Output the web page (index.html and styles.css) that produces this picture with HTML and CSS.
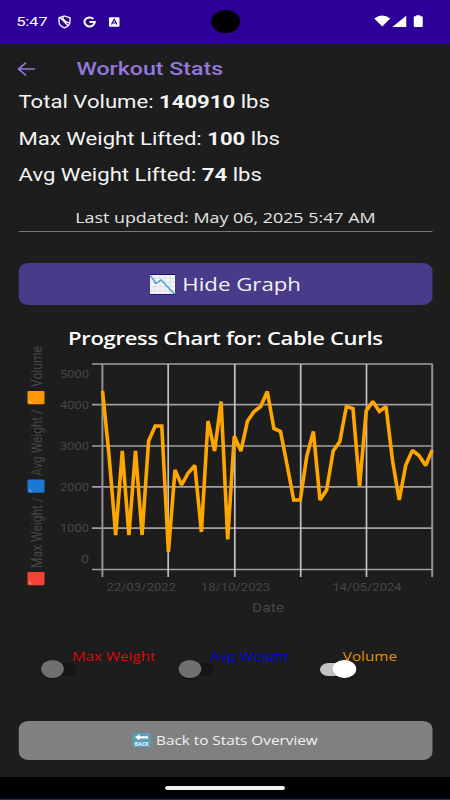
FILE: index.html
```html
<!DOCTYPE html>
<html lang="en">
<head>
<meta charset="utf-8">
<title>Workout Stats</title>
<link rel="stylesheet" href="styles.css">
</head>
<body>
<div class="phone">
  <header class="status">
    <span class="clock">5:47</span>
    <svg class="status-left" viewBox="0 0 64 14" preserveAspectRatio="none">
      <path d="M7 1 L12.500 2.800 V6.500 C12.500 9.700 10 11.900 7 12.800 C4 11.900 1.500 9.700 1.500 6.500 V2.800 Z M3 3 L11 11 M5.500 2 C5 6 8 6 11.500 8" fill="none" stroke="#fff" stroke-width="1.300"/>
      <path d="M36 3.900 A5.200 4.500 0 1 0 37.300 7 H32" fill="none" stroke="#fff" stroke-width="2"/>
      <rect x="51.500" y="2.300" width="10.500" height="9.400" rx="1" fill="#fff"/>
      <path d="M54 9.500 L56.700 4.300 L59.500 9.500 M55.200 8 H58.300" fill="none" stroke="#2d0097" stroke-width="1.200"/>
    </svg>
    <span class="camera"></span>
    <svg class="status-right" viewBox="0 0 52 14" preserveAspectRatio="none">
      <path d="M0.500 4.500 Q8.500 -1.500 16.500 4.500 L8.500 12.500 Z" fill="#fff"/>
      <path d="M18.500 13 L32.500 1.800 V13 Z" fill="#fff"/>
      <path d="M40 3 Q40 2.300 41 2.300 H42.500 V1.300 H46.500 V2.300 H48 Q49 2.300 49 3 V12 Q49 13 48 13 H41 Q40 13 40 12 Z" fill="#fff"/>
    </svg>
  </header>

  <nav class="toolbar">
    <svg class="back" viewBox="0 0 18 14" preserveAspectRatio="none">
      <path d="M17.500 7 H1 M8.500 0.700 L1 7 L8.500 13.300" fill="none" stroke="#9478dc" stroke-width="1.600"/>
    </svg>
    <h1 class="title">Workout Stats</h1>
  </nav>

  <main class="content">
    <p class="stat">Total Volume: <b>140910</b> lbs</p>
    <p class="stat">Max Weight Lifted: <b>100</b> lbs</p>
    <p class="stat">Avg Weight Lifted: <b>74</b> lbs</p>
    <p class="updated">Last updated: May 06, 2025 5:47 AM</p>
    <button class="btn graph-btn">
      <svg class="graph-icon" viewBox="0 0 25 20" preserveAspectRatio="none">
        <rect width="25" height="20" fill="#f4f5f7"/>
        <path d="M5 0V20M10 0V20M15 0V20M20 0V20M0 4H25M0 8H25M0 12H25M0 16H25" stroke="#d5dbe0" stroke-width=".8"/>
        <path d="M0 .5H25M0 19.500H25" stroke="#20107c"/>
        <path d="M0.500 1.500 L6 9 L11 5.500 L24.500 19" fill="none" stroke="#2f9ad6" stroke-width="1.300"/>
      </svg>
      <span>Hide Graph</span>
    </button>
    <h2 class="chart-title">Progress Chart for: Cable Curls</h2>
  </main>

  <svg class="chart" viewBox="0 345 450 275" preserveAspectRatio="none">
    <path class="grid-h" d="M92 364H432.500M92 404.700H432M92 446H432M92 486.800H432M92 528.200H432M92 569.500H432"/>
    <path class="grid-v" d="M168.200 364V577M234.800 364V577M300.700 364V577M366.500 364V577"/>
    <path class="grid-edge" d="M102.400 364V577M432.200 364V577"/>
    <polyline class="volume" points="102.500,391 109.100,456 115.700,535 122.300,451 128.900,535 135.500,451 142.100,535 148.600,441 155.200,426 161.800,426 168.400,552 175,470 181.600,485 188.200,473 194.800,465.500 201.400,532 208,421 214.600,451 221.100,401.500 227.700,539.500 234.300,436 240.900,451 247.500,421 254.100,411.500 260.700,406.500 267.300,391.500 273.900,428.500 280.500,431.500 287.100,465 293.700,500 300.300,500 306.800,456 313.400,431.500 320,500 326.600,490 333.200,451 339.800,441.500 346.400,406.500 353,408.500 359.600,486 366.200,411 372.800,401.500 379.400,411.500 386,406.500 392.600,461 399.200,500 405.800,465 412.400,450.500 419,455.500 425.600,465.500 432.200,450"/>
    <g class="axis-label">
      <text x="60" y="378" textLength="29" lengthAdjust="spacingAndGlyphs">5000</text>
      <text x="60" y="409" textLength="29" lengthAdjust="spacingAndGlyphs">4000</text>
      <text x="60" y="450" textLength="29" lengthAdjust="spacingAndGlyphs">3000</text>
      <text x="60" y="491" textLength="29" lengthAdjust="spacingAndGlyphs">2000</text>
      <text x="60" y="532" textLength="29" lengthAdjust="spacingAndGlyphs">1000</text>
      <text x="81" y="562.500" textLength="8" lengthAdjust="spacingAndGlyphs">0</text>
      <text x="106.500" y="591" textLength="69.500" lengthAdjust="spacingAndGlyphs">22/03/2022</text>
      <text x="201" y="591" textLength="69" lengthAdjust="spacingAndGlyphs">18/10/2023</text>
      <text x="332.500" y="591" textLength="69" lengthAdjust="spacingAndGlyphs">14/05/2024</text>
      <text class="axis-name" x="252" y="612" textLength="32" lengthAdjust="spacingAndGlyphs">Date</text>
    </g>
    <g class="legend" transform="translate(41.500 0)">
      <text transform="translate(0 568) rotate(-90)" textLength="71" lengthAdjust="spacingAndGlyphs">Max Weight /</text>
      <text transform="translate(0 476) rotate(-90)" textLength="67" lengthAdjust="spacingAndGlyphs">Avg Weight /</text>
      <text transform="translate(0 387) rotate(-90)" textLength="41" lengthAdjust="spacingAndGlyphs">Volume</text>
    </g>
    <rect x="27.500" y="391" width="17" height="13.300" rx="1" fill="#ff9800"/>
    <rect x="27.500" y="479.500" width="17" height="13.300" rx="1" fill="#1d77d5"/>
    <rect x="27.500" y="572" width="17" height="13.300" rx="1" fill="#f44336"/>
    <path d="M29 401L31.500 403.200M29 489.500L31.500 491.700M29 582L31.500 584.200" stroke="#fff" stroke-opacity=".6"/>
  </svg>

  <section class="toggles">
    <div class="toggle max"><span class="switch"></span><span class="label">Max Weight</span></div>
    <div class="toggle avg"><span class="switch"></span><span class="label">Avg Weight</span></div>
    <div class="toggle vol"><span class="switch on"></span><span class="label">Volume</span></div>
  </section>

  <button class="btn back-btn">
    <svg class="back-icon" viewBox="0 0 18 14" preserveAspectRatio="none">
      <rect width="18" height="14" rx="1" fill="#5c9fbd"/>
      <path d="M2.500 4.300 L7 1.300 V3.300 H15.500 V5.500 H7 V7.300 Z" fill="#fff"/>
      <text x="2" y="12.600" textLength="14" lengthAdjust="spacingAndGlyphs">BACK</text>
    </svg>
    <span>Back to Stats Overview</span>
  </button>

  <footer class="navbar"><span class="handle"></span></footer>
</div>
</body>
</html>
```

FILE: styles.css
```css
* { box-sizing: border-box; }
html, body { margin: 0; height: 800px; overflow: hidden; background: #1d1d1d; }
h1, h2, p { margin: 0; font-weight: 400; white-space: nowrap; }

/* The screen is laid out 360 wide and widened to fill the window. */
.phone {
  width: 360px;
  height: 800px;
  display: flex;
  flex-direction: column;
  transform: scaleX(1.25);
  transform-origin: 0 0;
  background: #1d1d1d;
  color: #f4f4f4;
  font-family: "Open Sans", sans-serif;
}

.status {
  position: relative;
  height: 44px;
  flex: none;
  display: flex;
  align-items: center;
  padding: 0 19.200px 0 13px;
  background: #2d0097;
}
.clock { width: 33.200px; font: 13.300px/44px Roboto, sans-serif; letter-spacing: -.2px; color: #fff; }
.status-left { width: 51.200px; height: 14px; }
.status-right { width: 41.600px; height: 14px; margin-left: auto; margin-top: -2px; }
.camera {
  position: absolute;
  left: 168.800px;
  top: 10px;
  width: 23px;
  height: 23px;
  border-radius: 50%;
  background: #000;
}

.toolbar { height: 46px; flex: none; display: flex; align-items: center; padding: 4px 0 0 14px; }
.back { width: 14.400px; height: 14px; }
.title { margin-left: 32.800px; font: 500 18.500px/24px Roboto, sans-serif; color: #9478dc; }

.content { display: flex; flex-direction: column; padding: 0 14.200px 0 14.800px; height: 255px; flex: none; }
.stat { height: 36.700px; flex: none; padding-top: 1px; font: 17.700px/23px Roboto, sans-serif; }
.updated {
  height: 32px;
  border-bottom: 1.500px solid #777;
  text-align: center;
  font-size: 14.300px;
  line-height: 35px;
  color: #e4e4e4;
}
.btn {
  display: flex;
  align-items: center;
  justify-content: center;
  flex: none;
  border: 0;
  padding: 0;
  border-radius: 8px;
  color: #f0f0f4;
  font-family: inherit;
}
.graph-btn { height: 42px; margin-top: 31px; gap: 6px; background: #493b89; font-size: 17.800px; }
.graph-icon { width: 20px; height: 21px; }
.chart-title { margin-top: 26px; text-align: center; font-size: 17.600px; letter-spacing: -.25px; font-weight: 600; line-height: 15px; color: #fff; }

.chart { width: 360px; height: 275px; flex: none; overflow: visible; font-family: Roboto, sans-serif; }
.chart text { fill: #47454c; }
.axis-label { font-size: 11.500px; }
.axis-label .axis-name { font-size: 13px; }
.legend { font-size: 15px; }
.grid-h { fill: none; stroke: #a09ea4; stroke-width: 1.700; }
.grid-v { fill: none; stroke: #c2bfc6; stroke-width: 1.700; }
.grid-edge { fill: none; stroke: #949198; stroke-width: 2; }
.volume { fill: none; stroke: #ffa500; stroke-width: 3.600; stroke-linejoin: miter; stroke-miterlimit: 1.500; }

.toggles { height: 100.500px; flex: none; display: flex; padding: 27px 0 0 32.800px; }
.toggle { width: 110px; display: flex; align-items: flex-start; }
.toggle.vol { width: 100px; padding-left: 3.200px; }
.switch { position: relative; width: 28.500px; height: 44px; flex: none; }
.switch::before {
  content: "";
  position: absolute;
  left: 6px;
  top: 15.500px;
  width: 22px;
  height: 13px;
  border-radius: 7px;
  background: #151515;
}
.switch::after {
  content: "";
  position: absolute;
  left: 0;
  top: 13px;
  width: 18.500px;
  height: 18px;
  border-radius: 50%;
  background: #707070;
  box-shadow: 0 1px 1px rgba(0, 0, 0, .4);
}
.switch.on::before { left: 0; background: #c4c4c4; }
.switch.on::after { left: 10.200px; background: #fff; }
.label { position: relative; z-index: -1; margin-left: -3.800px; font-size: 12.200px; line-height: 19px; white-space: nowrap; }
.max .label { color: #dc0808; }
.avg .label { color: #0606dc; margin-left: -3px; }
.vol .label { color: #e09208; margin-left: -10.200px; }

.back-btn { height: 39px; margin: 0 14.200px 0 14.800px; gap: 4px; background: #808080; font-size: 12.300px; letter-spacing: -.03px; }
.back-icon { width: 14.400px; height: 14px; }
.back-icon text { font: 700 5px "Open Sans", sans-serif; fill: #e8f4fa; }

.navbar {
  height: 23px;
  flex: none;
  margin-top: auto;
  background: #000;
  display: flex;
  justify-content: center;
  align-items: center;
  border-bottom: 1.500px solid #173269;
}
.handle { width: 96.800px; height: 4px; border-radius: 2px; background: #f2eef2; }
```
